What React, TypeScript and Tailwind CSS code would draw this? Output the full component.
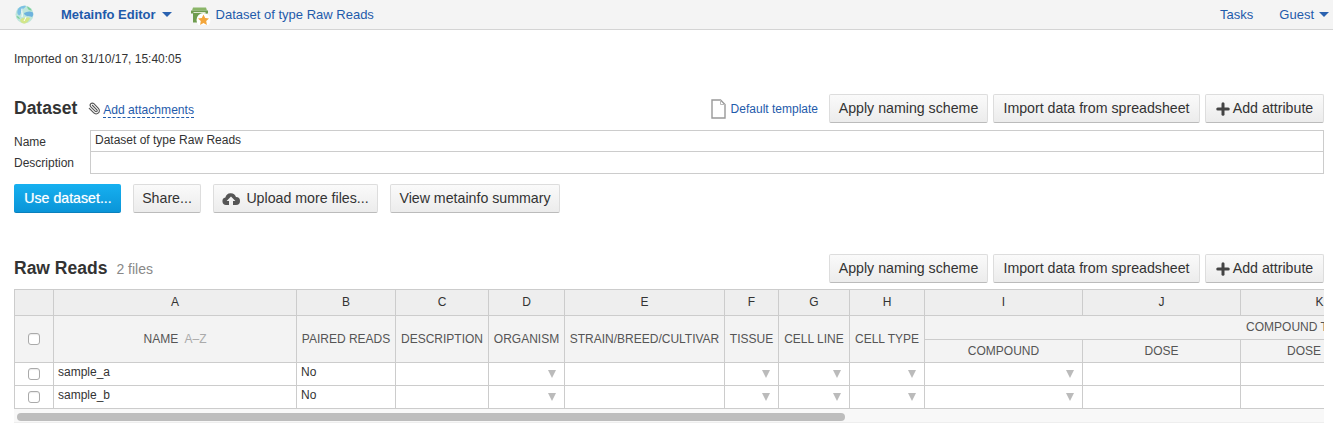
import React from 'react';
import { Plus, Paperclip } from 'lucide-react';

const cols = [39, 243, 99, 93, 76, 160, 54, 71, 75, 158, 158, 158];
const letters = ['A', 'B', 'C', 'D', 'E', 'F', 'G', 'H', 'I', 'J', 'K'];
const topHeaders = ['PAIRED READS', 'DESCRIPTION', 'ORGANISM', 'STRAIN/BREED/CULTIVAR', 'TISSUE', 'CELL LINE', 'CELL TYPE'];
const rows = ['sample_a', 'sample_b'];
// columns C to K
const hasArrow = [false, true, false, true, true, true, true, false, false];

function Btn({ children, className = '' }: { children: React.ReactNode; className?: string }) {
  return (
    <button className={`h-[29px] px-[8px] flex items-center justify-center rounded-[2px] border border-[#ddd] border-b-[#bbb] bg-gradient-to-b from-[#fafafa] to-[#ececec] text-[14.2px] text-[#333] whitespace-nowrap ${className}`}>
      {children}
    </button>
  );
}

function Caret({ className = '' }: { className?: string }) {
  return <span className={`inline-block w-0 h-0 border-l-[5px] border-r-[5px] border-t-[5px] border-l-transparent border-r-transparent border-t-[#2a62b0] ${className}`} />;
}

function Globe() {
  return (
    <svg width="19" height="19" viewBox="0 0 19 19" className="block">
      <circle cx="9.500" cy="9.500" r="9" fill="#bfe6dc" />
      <path d="M3 4c2-3 6-3.500 8-3-1 2-3 2.500-4 4S6 9 5 10 1 9 3 4z" fill="#7cc0e4" />
      <path d="M9 8c3-1.500 6-2 9-.5.5 2 0 3.500-1 4.500-2-1-3.500-.5-5-1S9 9.500 9 8z" fill="#6db2de" />
      <path d="M5 15c2-2.500 6-3 10-2-1 3-3.500 5.500-6 5.500-2 0-3.500-1.500-4-3.500z" fill="#d3e68a" />
      <path d="M12 1.500c2 .5 4 2 4.800 4-2 .3-4-.5-4.800-4z" fill="#7fd09a" />
      <path d="M1.500 11c1.500 0 3 1 3.500 3-1.500 0-3-1-3.500-3z" fill="#7fd09a" />
      <path d="M7 3.500c-1 3 1 5.500 0 8.500M11 12c-1 1.500-1 3-2 4" stroke="#fff" strokeWidth="1" fill="none" />
    </svg>
  );
}

function DatasetIcon() {
  return (
    <svg width="20" height="20" viewBox="0 0 20 20" className="block">
      <path d="M2 2.500h13l1 3H1z" fill="#8ab568" />
      <path d="M0 5.500h17v3h-1v9H2v-9H0z" fill="#6f9c4f" />
      <path d="M2.500 7.500h12" stroke="#dfe8d0" strokeWidth="1" />
      <circle cx="12.500" cy="15" r="7" fill="#fff" />
      <path d="M12.500 9.500l1.700 3.500 3.800.5-2.800 2.600.7 3.800-3.400-1.900-3.400 1.900.7-3.800-2.800-2.600 3.800-.5z" fill="#f3a63b" />
    </svg>
  );
}

function FileIcon() {
  return (
    <svg width="15" height="20" viewBox="0 0 15 20" fill="none" className="block">
      <path d="M1 1h8.500L14 5.500V19H1z" fill="#fff" stroke="#999" strokeWidth="1.400" />
      <path d="M9.500 1v4.500H14" stroke="#bbb" strokeWidth="1" />
    </svg>
  );
}

function CloudIcon() {
  return (
    <svg width="18" height="14" viewBox="0 0 18 14" className="block">
      <path d="M4 13a3.800 3.800 0 0 1-.6-7.500A5.500 5.500 0 0 1 14 5a4 4 0 0 1 0 8h-3V9h2.400L9 4.500 4.600 9H7v4z" fill="#555" />
    </svg>
  );
}

function Check() {
  return <span className="block w-[12px] h-[12px] mx-auto rounded-[3px] border border-[#aaa] bg-white shadow-[inset_0_1px_1px_rgba(0,0,0,0.08)]" />;
}

function DataArrow() {
  return <span className="absolute right-[8px] top-[7px] w-0 h-0 border-l-[4px] border-r-[4px] border-t-[8px] border-l-transparent border-r-transparent border-t-[#bbb]" />;
}

function ActionRow() {
  return (
    <div className="flex gap-[5px]">
      <Btn className="w-[159px]">Apply naming scheme</Btn>
      <Btn className="w-[207px]">Import data from spreadsheet</Btn>
      <Btn className="w-[119px] gap-[3px]"><Plus size={18} strokeWidth={4} className="-mx-[2px] text-[#444]" />Add attribute</Btn>
    </div>
  );
}

const th = 'border border-[#ccc] bg-[#f3f3f3] font-normal text-[12px] text-[#555] text-center p-0 whitespace-nowrap';
const letter = 'border border-[#ccc] bg-[#eeeeee] font-normal text-[12px] text-[#333] text-center p-0 pb-[2px] h-[26px]';
const td = 'relative border border-[#ccc] bg-white text-[12px] text-[#333] p-0 pl-[4px] h-[23px] align-top leading-[18px]';

export default function App() {
  return (
    <div className="w-[1333px] h-[432px] overflow-hidden bg-white text-[#333] font-['Liberation_Sans',Arial,sans-serif]">
      <header className="h-[30px] bg-[#f4f4f4] border-b border-[#d4d4d4] flex items-center text-[13px] text-[#1f5bab]">
        <span className="ml-[15px]"><Globe /></span>
        <b className="ml-[27px]">Metainfo Editor</b>
        <Caret className="ml-[6px]" />
        <span className="ml-[19px]"><DatasetIcon /></span>
        <span className="ml-[5px]">Dataset of type Raw Reads</span>
        <span className="ml-auto">Tasks</span>
        <span className="ml-[26px]">Guest</span>
        <Caret className="ml-[5px] mr-[4px]" />
      </header>

      <main className="px-[14px] pr-[9px]">
        <p className="mt-[23px] text-[12px] leading-[13px]">Imported on 31/10/17, 15:40:05</p>

        <div className="mt-[28px] flex items-center h-[29px]">
          <h2 className="text-[17.5px] font-bold">Dataset</h2>
          <Paperclip size={13} className="ml-[11px] text-[#555] -scale-x-100" />
          <span className="ml-[2px] text-[12.1px] text-[#1f5bab] border-b border-dashed border-[#1f5bab] leading-[14px] mt-[3px]">Add attachments</span>
          <span className="ml-auto mr-[11px] flex items-center gap-[5px] text-[12px] text-[#1f5bab]"><FileIcon />Default template</span>
          <ActionRow />
        </div>

        <div className="mt-[7px] flex">
          <div className="w-[76px] text-[12px] leading-[22px]">
            <div className="pt-[1px]">Name</div>
            <div className="-mt-[1px]">Description</div>
          </div>
          <div className="flex-1 border border-[#ccc] text-[12px]">
            <div className="h-[21px] border-b border-[#ccc] pl-[4px] leading-[18px]">Dataset of type Raw Reads</div>
            <div className="h-[20px]" />
          </div>
        </div>

        <div className="mt-[10px] flex gap-[12px]">
          <button className="w-[107px] h-[29px] pl-[1px] pt-[2px] rounded-[2px] bg-gradient-to-b from-[#16b0f0] to-[#0a95d8] border-b border-[#0a80bc] text-white text-[14.2px] [text-shadow:0_0_1px_rgba(255,255,255,0.6)]">Use dataset...</button>
          <Btn className="w-[68px] pt-[1px]">Share...</Btn>
          <Btn className="w-[165px] gap-[6px] pt-[1px]"><CloudIcon />Upload more files...</Btn>
          <Btn className="w-[170px] pt-[1px]">View metainfo summary</Btn>
        </div>

        <div className="mt-[41px] flex items-center h-[29px]">
          <h2 className="text-[17.5px] font-bold">Raw Reads</h2>
          <span className="ml-[9px] mt-[2px] text-[14px] text-[#888]">2 files</span>
          <span className="ml-auto" />
          <ActionRow />
        </div>

        <div className="mt-[6px] w-[1310px] overflow-hidden">
          <table className="table-fixed border-collapse w-[1384px]">
            <colgroup>
              {cols.map((w, i) => <col key={i} style={{ width: w }} />)}
            </colgroup>
            <thead>
              <tr>
                <th className={letter} />
                {letters.map(l => <th key={l} className={letter}>{l}</th>)}
              </tr>
              <tr className="h-[24px]">
                <th rowSpan={2} className={th}><Check /></th>
                <th rowSpan={2} className={th}>NAME <span className="ml-[3px] text-[#aaa]">A–Z</span></th>
                {topHeaders.map(h => <th key={h} rowSpan={2} className={th}>{h}</th>)}
                <th colSpan={3} className={`${th} pl-[316px] pb-[2px]`}>COMPOUND TREATMENT</th>
              </tr>
              <tr className="h-[23px]">
                <th className={th}>COMPOUND</th>
                <th className={th}>DOSE</th>
                <th className={`${th} pr-[31px]`}>DOSE</th>
              </tr>
            </thead>
            <tbody>
              {rows.map(r => (
                <tr key={r}>
                  <td className={`${td} !pl-0`}><div className="pt-[5px]"><Check /></div></td>
                  <td className={td}>{r}</td>
                  <td className={td}>No</td>
                  {hasArrow.map((a, i) => <td key={i} className={td}>{a && <DataArrow />}</td>)}
                </tr>
              ))}
            </tbody>
          </table>
        </div>

        <div className="w-[1310px] h-[14px] bg-[#f8f8f8] border-b border-[#eee]">
          <div className="ml-[3px] mt-[4px] float-left w-[828px] h-[8px] rounded-full bg-[#bdbdbd]" />
        </div>
      </main>
    </div>
  );
}
